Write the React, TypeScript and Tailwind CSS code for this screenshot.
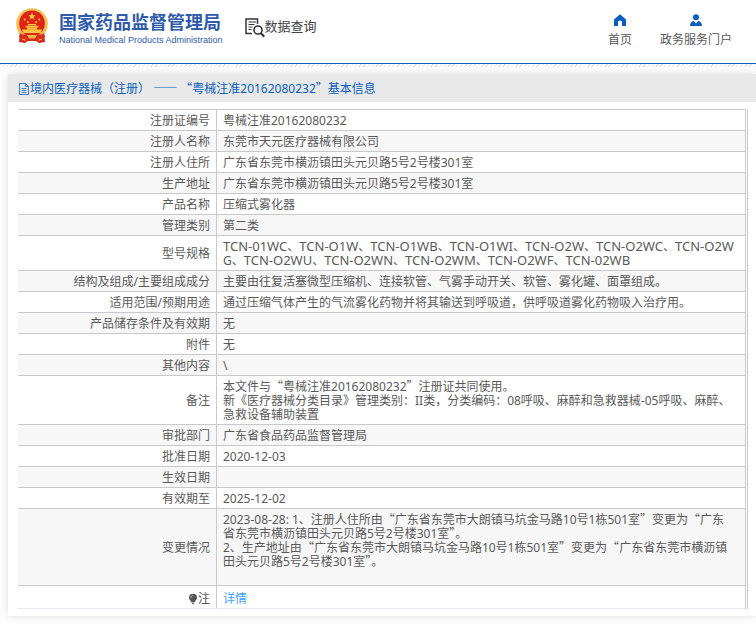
import { Fragment } from "react";

type Row = { label: string; value: string; tail?: boolean };

const rows: Row[] = [
  { label: "注册证编号", value: "粤械注准20162080232" },
  { label: "注册人名称", value: "东莞市天元医疗器械有限公司" },
  { label: "注册人住所", value: "广东省东莞市横沥镇田头元贝路5号2号楼301室" },
  { label: "生产地址", value: "广东省东莞市横沥镇田头元贝路5号2号楼301室" },
  { label: "产品名称", value: "压缩式雾化器" },
  { label: "管理类别", value: "第二类" },
  {
    label: "型号规格",
    value:
      "TCN-01WC、TCN-O1W、TCN-O1WB、TCN-O1WI、TCN-O2W、TCN-O2WC、TCN-O2W\nG、TCN-O2WU、TCN-O2WN、TCN-O2WM、TCN-O2WF、TCN-02WB",
  },
  { label: "结构及组成/主要组成成分", value: "主要由往复活塞微型压缩机、连接软管、气雾手动开关、软管、雾化罐、面罩组成。" },
  { label: "适用范围/预期用途", value: "通过压缩气体产生的气流雾化药物并将其输送到呼吸道，供呼吸道雾化药物吸入治疗用。" },
  { label: "产品储存条件及有效期", value: "无" },
  { label: "附件", value: "无" },
  { label: "其他内容", value: "\\" },
  {
    label: "备注",
    value:
      "本文件与“粤械注准20162080232”注册证共同使用。\n新《医疗器械分类目录》管理类别：II类，分类编码：08呼吸、麻醉和急救器械-05呼吸、麻醉、\n急救设备辅助装置",
  },
  { label: "审批部门", value: "广东省食品药品监督管理局" },
  { label: "批准日期", value: "2020-12-03" },
  { label: "生效日期", value: "" },
  { label: "有效期至", value: "2025-12-02" },
  {
    label: "变更情况",
    value:
      "2023-08-28: 1、注册人住所由“广东省东莞市大朗镇马坑金马路10号1栋501室”变更为“广东\n省东莞市横沥镇田头元贝路5号2号楼301室”。\n2、生产地址由“广东省东莞市大朗镇马坑金马路10号1栋501室”变更为“广东省东莞市横沥镇\n田头元贝路5号2号楼301室”。",
    tail: true,
  },
];

/** Sets quotes and dashes in the Chinese face (full-width cells) and model codes one size up. */
function Han({ text }: { text: string }) {
  return (
    <>
      {text.split(/([“”—]+|TCN-\w+)/).map((part, i) => {
        if (i % 2 === 0) return <Fragment key={i}>{part}</Fragment>;
        return part.startsWith("TCN") ? (
          <span key={i} className="text-[13px] leading-none">
            {part}
          </span>
        ) : (
          <span key={i} className="font-['Noto_Sans_CJK_SC',sans-serif] leading-none">
            {part}
          </span>
        );
      })}
    </>
  );
}

function Emblem() {
  return (
    <svg viewBox="0 0 34 36" className="h-9 w-[34px] shrink-0" aria-hidden="true">
      <path d="M5 25h24l1 9-6 1-3-2h-8l-3 2-6-1z" fill="#d8261c" />
      <circle cx="17" cy="16" r="15.8" fill="#efb94a" />
      <circle cx="17" cy="16" r="14.6" fill="none" stroke="#f7d878" strokeWidth="1" strokeDasharray="2 1" />
      <circle cx="17" cy="15.4" r="12.8" fill="#df2417" />
      <path d="M17 4.6l1 2.6h2.7l-2.2 1.7.8 2.7-2.3-1.6-2.3 1.6.8-2.7-2.2-1.7H16z" fill="#f9d34c" />
      <g fill="#f9c63f">
        <circle cx="9.8" cy="11.6" r="1" />
        <circle cx="13" cy="14" r="1" />
        <circle cx="21" cy="14" r="1" />
        <circle cx="24.2" cy="11.6" r="1" />
        <path d="M12 17.4l1.6-1.4h6.8l1.6 1.4zM10.6 18h12.8v1.4H10.6zM12 19.8h10v1.4H12zM7 21.6h20l-1.4 3.4H8.4z" />
      </g>
      <path d="M5 25c4 3.4 8 1 12 1s8 2.4 12-1l1 4c-4 2-7 1-9 3h-8c-2-2-5-1-9-3z" fill="#dc2a1b" />
      <path d="M12 27h10l-2 3.600h-6z" fill="#efb94a" />
      <path d="M7 31l3.6 1.2M27 31l-3.6 1.2" stroke="#efb94a" strokeWidth="1.2" />
    </svg>
  );
}

function SearchDocIcon() {
  return (
    <svg viewBox="0 0 20 20" className="size-5" fill="none" stroke="#33333d" aria-hidden="true">
      <path d="M12.500 6V1H1v14.500h6" strokeWidth="1.5" />
      <path d="M3.500 4h7.500M3.500 6.500h6M3.500 9h4M3.500 11.500h3" strokeWidth="1" />
      <circle cx="13" cy="12" r="4" strokeWidth="1.6" />
      <path d="M15.800 15l3.400 3.800" strokeWidth="2.200" />
    </svg>
  );
}

export default function App() {
  return (
    <div className="min-h-screen bg-[#fdfdfd] pb-2 font-['Noto_Sans','Noto_Sans_CJK_SC',sans-serif] text-xs leading-[14px] text-[#595959]" lang="zh-CN">
      <header className="flex h-16 items-start justify-between border-b border-[#0a5fb8] bg-white pr-6 pl-[15px]">
        <div className="flex">
          <div className="flex items-start gap-[10px] pt-2">
            <Emblem />
            <div className="pt-1 whitespace-nowrap text-[#2f5bab]">
              <h1 className="text-lg leading-5 font-bold">国家药品监督管理局</h1>
              <p className="font-['Liberation_Sans',sans-serif] text-[9px] leading-4">
                National Medical Products Administration
              </p>
            </div>
          </div>
          <div className="ml-[22px] flex items-start pt-[18px] text-[#444]">
            <SearchDocIcon />
            <span className="text-[13px] leading-4">数据查询</span>
          </div>
        </div>
        <nav className="flex gap-7 pt-[14px]">
          <a href="#home" className="flex flex-col items-center gap-[7px]">
            <svg viewBox="0 0 12 12" className="size-3" fill="#0a5fc0" aria-hidden="true">
              <path d="M6 .3L12 5.500V12H8V8.500a2 2 0 0 0-4 0V12H0V5.500z" />
            </svg>
            首页
          </a>
          <a href="#portal" className="flex flex-col items-center gap-[7px]">
            <svg viewBox="0 0 12 12" className="size-3" fill="#0a5fc0" aria-hidden="true">
              <circle cx="6" cy="3.200" r="3" />
              <path d="M0 12c0-3 1.500-4.800 3.800-5L6 9.500 8.200 7C10.500 7.200 12 9 12 12z" />
            </svg>
            政务服务门户
          </a>
        </nav>
      </header>
      <div className="h-[3px] bg-[repeating-linear-gradient(135deg,#e4e4e4_0px,#e4e4e4_1px,#ffffff_1px,#ffffff_3px)]" />

      <main className="mt-[7px] ml-2 bg-white pb-[7px] shadow-[0_0_8px_rgba(0,0,0,0.12)]">
        <h2 className="flex h-7 items-center bg-[#e9e9e9] pt-0.5 pl-[10px] text-[#0a5fc0]">
          <svg viewBox="0 0 12 12" className="size-3" fill="none" stroke="#0a5fc0" aria-hidden="true">
            <path d="M1.500.5h6l3 3v8h-9zM7.500.5v3h3M3.500 5.500h5M3.500 7.500h5M3.500 9.500h5" strokeWidth=".8" />
          </svg>
          <span className="whitespace-pre">
            <Han text="境内医疗器械（注册） —— “粤械注准20162080232”基本信息" />
          </span>
        </h2>
        <div className="mt-[7px] mr-2 ml-[10px] border-r border-[#c9c9cf] pr-px">
          <table className="w-full border-separate border-spacing-0 border-t border-r border-[#c9c9cf]">
            <tbody>
              {rows.map((row, i) => (
                <tr key={row.label} className={i % 2 ? "bg-[#f7f7f7]" : "bg-white"}>
                  <th scope="row" className="w-[199px] border-r border-b border-[#c9c9cb] pt-1 pr-[6px] pb-0.5 text-right font-normal">
                    {row.label}
                  </th>
                  <td className="h-[21px] border-b border-[#c9c9cb] pt-1 pb-0.5 pl-[6px] whitespace-pre-line">
                    <Han text={row.value} />
                    {row.tail && <div className="h-[14px]" />}
                  </td>
                </tr>
              ))}
              <tr className="bg-white">
                <th scope="row" className="border-r border-b border-r-[#c9c9cb] border-b-[#e8e8f4] pt-[6px] pr-[6px] pb-0.5 font-normal">
                  <span className="flex items-center justify-end">
                    <svg viewBox="0 0 10 12" className="h-3 w-[10px]" fill="#555" aria-hidden="true">
                      <path d="M5 .8a4 4 0 0 0-4 4C1 7 3 7.800 3.500 9.500h3C7 7.800 9 7 9 4.800a4 4 0 0 0-4-4zM4 10.200h2v1H4z" />
                      <path d="M3 4.500c0-1 .8-1.800 1.800-1.800" stroke="#fff" strokeWidth=".7" fill="none" />
                    </svg>
                    注
                  </span>
                </th>
                <td className="border-b border-[#e8e8f4] pt-[6px] pb-0.5 pl-[6px]">
                  <a href="#detail" className="text-[#409eff]">
                    详情
                  </a>
                </td>
              </tr>
            </tbody>
          </table>
        </div>
      </main>
    </div>
  );
}
